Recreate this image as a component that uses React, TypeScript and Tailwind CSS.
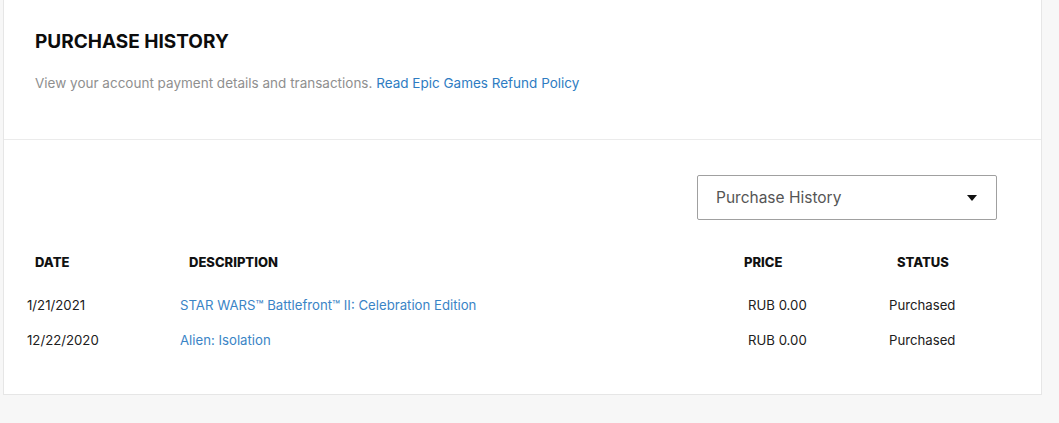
import React from 'react';

const rows = [
  { date: '1/21/2021', title: 'STAR WARS™ Battlefront™ II: Celebration Edition', price: 'RUB 0.00', status: 'Purchased' },
  { date: '12/22/2020', title: 'Alien: Isolation', price: 'RUB 0.00', status: 'Purchased' },
];

export default function App() {
  return (
    <div className="w-[1059px] h-[423px] bg-[#f7f7f7] overflow-hidden font-['Inter',sans-serif]">
      <div className="ml-[3px] w-[1039px] bg-white border border-t-0 border-[#e6e6e6]">
        {/* Header */}
        <div className="pl-[31px] pt-[30px] h-[140px] border-b border-[#ebebeb]">
          <h1 className="text-[19px] leading-[24px] font-bold text-[#0c0c0c]">PURCHASE HISTORY</h1>
          <p className="mt-[20px] text-[13.5px] leading-[18px] text-[#8f8f8f]">
            View your account payment details and transactions.{' '}
            <a className="text-[#2e7cc2]">Read Epic Games Refund Policy</a>
          </p>
        </div>

        {/* Filter */}
        <div className="flex justify-end pr-[44px] pt-[35px]">
          <button className="w-[300px] h-[45px] flex items-center justify-between border border-[#a0a0a0] rounded-[2px] pl-[18px] pr-[19px] text-[15.5px] text-[#555555]">
            <span>Purchase History</span>
            <svg width="10" height="6" viewBox="0 0 10 6">
              <path d="M0 0 L10 0 L5 6 Z" fill="#111" />
            </svg>
          </button>
        </div>

        {/* Table */}
        <div className="pl-[23px] pt-[31px] pb-[36px]">
          <div className="flex items-center h-[24px] text-[13px] font-extrabold text-[#111]">
            <div className="w-[153px] pl-[8px]">DATE</div>
            <div className="w-[560px] pl-[9px]">DESCRIPTION</div>
            <div className="w-[145px] pl-[4px]">PRICE</div>
            <div className="pl-[12px]">STATUS</div>
          </div>
          <div className="mt-[13px]">
            {rows.map((r) => (
              <div key={r.date} className="flex items-center h-[35px] text-[13.2px] text-[#202020]">
                <div className="w-[153px]">{r.date}</div>
                <div className="w-[560px] text-[#3a84c6]">{r.title}</div>
                <div className="w-[145px] pl-[8px]">{r.price}</div>
                <div className="pl-[4px]">{r.status}</div>
              </div>
            ))}
          </div>
        </div>
      </div>
    </div>
  );
}
